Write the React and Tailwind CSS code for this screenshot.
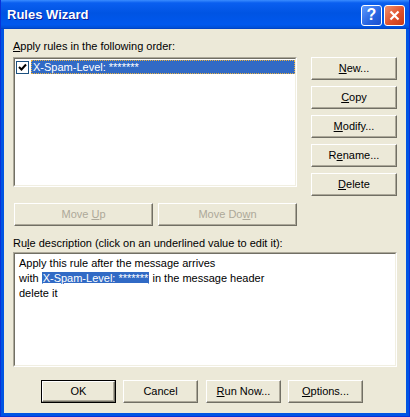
import React from 'react';

const font = { fontFamily: '"Liberation Sans", Arial, sans-serif' };

// classic raised dialog button
const Btn = ({ children, w = 'w-[86px]', disabled = false, def = false, className = '' }) => (
  <div className={`${w} h-[23px] shrink-0 ${def ? 'border border-black' : ''} ${className}`}>
    <div className={`h-full w-full flex items-center justify-center bg-[#ECE9D8] border-t border-l border-t-white border-l-white border-b border-r border-b-[#716F64] border-r-[#716F64] shadow-[inset_-1px_-1px_0_#ACA899] text-[11px] ${disabled ? 'text-[#ACA899]' : 'text-black'}`}>
      <span>{children}</span>
    </div>
  </div>
);

const U = ({ children }) => <span className="underline underline-offset-[1px]">{children}</span>;

const Sunken = ({ className = '', children }) => (
  <div className={`border-t border-l border-t-[#ACA899] border-l-[#ACA899] border-b border-r border-b-white border-r-white ${className}`}>
    <div className="h-full w-full bg-white border-t border-l border-t-[#716F64] border-l-[#716F64] border-b border-r border-b-[#F1EFE2] border-r-[#F1EFE2]">
      {children}
    </div>
  </div>
);

export default function App() {
  return (
    <div style={font} className="w-[410px] h-[417px] flex flex-col bg-[#0054E3] border-l border-r border-b border-[#0831D9] select-none">
      {/* title bar */}
      <div className="h-[29px] shrink-0 flex items-center pl-[6px] pr-[4px] bg-[linear-gradient(to_bottom,#3A8CFF_0%,#0A5FF0_10%,#0054E3_45%,#0058EE_85%,#0050D8_95%,#003DBF_100%)]">
        <span className="text-white font-bold text-[13px] [text-shadow:1px_1px_0_#0A1E9C]">Rules Wizard</span>
        <div className="ml-auto flex gap-[2px] mt-[1px]">
          <div className="w-[21px] h-[21px] rounded-[3px] border border-white bg-[linear-gradient(135deg,#5E9BFF,#2663E0_60%,#1A4FD0)] flex items-center justify-center">
            <span className="text-white font-bold text-[16px] leading-none">?</span>
          </div>
          <div className="w-[21px] h-[21px] rounded-[3px] border border-white bg-[linear-gradient(135deg,#F0916E,#E0512C_55%,#C83A14)] flex items-center justify-center">
            <svg width="11" height="11" viewBox="0 0 11 11">
              <path d="M1.5 1.5 L9.5 9.5 M9.5 1.5 L1.5 9.5" stroke="white" strokeWidth="2.2" />
            </svg>
          </div>
        </div>
      </div>

      {/* client */}
      <div className="flex-1 mx-[3px] mb-[3px] bg-[#ECE9D8] px-[9px] flex flex-col text-[11px] text-black">
        <div className="pt-[10px] leading-[14px]"><U>A</U>pply rules in the following order:</div>

        <div className="mt-[4px] flex gap-[14px]">
          <Sunken className="w-[284px] h-[130px]">
            <div className="flex items-center pt-[1px] pl-[1px]">
              <div className="w-[13px] h-[13px] bg-white border border-[#1C5180] flex items-center justify-center">
                <svg width="9" height="9" viewBox="0 0 9 9">
                  <path d="M1 4 L3.5 6.5 L8 1.5" stroke="black" strokeWidth="2" fill="none" />
                </svg>
              </div>
              <div className="ml-[2px] flex-1 h-[14px] bg-[#316AC5] border border-dotted border-[#E8B040] text-white leading-[12px] pl-[1px]">
                X-Spam-Level: *******
              </div>
            </div>
          </Sunken>
          <div className="flex flex-col gap-[6px]">
            <Btn><U>N</U>ew...</Btn>
            <Btn><U>C</U>opy</Btn>
            <Btn><U>M</U>odify...</Btn>
            <Btn>R<U>e</U>name...</Btn>
            <Btn><U>D</U>elete</Btn>
          </div>
        </div>

        <div className="mt-[7px] flex gap-[5px] pl-[1px]">
          <Btn w="w-[139px]" disabled>Move <U>U</U>p</Btn>
          <Btn w="w-[139px]" disabled>Move Do<U>w</U>n</Btn>
        </div>

        <div className="mt-[10px] leading-[14px]">Ru<U>l</U>e description (click on an underlined value to edit it):</div>

        <Sunken className="mt-[2px] h-[115px]">
          <div className="pt-[2px] pl-[4px] leading-[15px]">
            <div>Apply this rule after the message arrives</div>
            <div>
              with <span className="bg-[#316AC5] text-white underline px-[1px]">X-Spam-Level: *******</span> in the message header
            </div>
            <div>delete it</div>
          </div>
        </Sunken>

        <div className="mt-[13px] flex pl-[28px]">
          <Btn w="w-[75px]" def>OK</Btn>
          <Btn w="w-[75px]" className="ml-[7px]">Cancel</Btn>
          <Btn w="w-[75px]" className="ml-[8px]"><U>R</U>un Now...</Btn>
          <Btn w="w-[75px]" className="ml-[7px]"><U>O</U>ptions...</Btn>
        </div>
      </div>
    </div>
  );
}
